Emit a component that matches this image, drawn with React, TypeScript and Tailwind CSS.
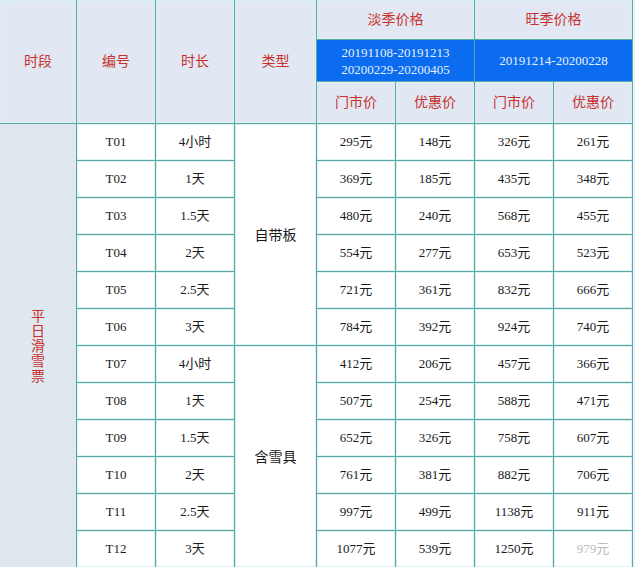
import React from "react";

const rows = [
  ["T01", "4小时", "295元", "148元", "326元", "261元"],
  ["T02", "1天", "369元", "185元", "435元", "348元"],
  ["T03", "1.5天", "480元", "240元", "568元", "455元"],
  ["T04", "2天", "554元", "277元", "653元", "523元"],
  ["T05", "2.5天", "721元", "361元", "832元", "666元"],
  ["T06", "3天", "784元", "392元", "924元", "740元"],
  ["T07", "4小时", "412元", "206元", "457元", "366元"],
  ["T08", "1天", "507元", "254元", "588元", "471元"],
  ["T09", "1.5天", "652元", "326元", "758元", "607元"],
  ["T10", "2天", "761元", "381元", "882元", "706元"],
  ["T11", "2.5天", "997元", "499元", "1138元", "911元"],
  ["T12", "3天", "1077元", "539元", "1250元", "979元"],
];

const head =
  "flex items-center justify-center bg-[#e1e8f4] text-[#c8302c] text-[14px] ring-1 ring-inset ring-[#d9f3f5]";
const cell =
  "flex items-center justify-center bg-white text-[13px] text-[#1a1a1a] ring-1 ring-inset ring-[#daf4f4]";

export default function App() {
  return (
    <div className="w-[635px] h-[567px] overflow-hidden bg-[#e6f6f8] font-['Liberation_Serif','Noto_Sans_CJK_SC',serif]">
      <div className="grid w-[633px] grid-cols-[76px_78px_78px_81px_78px_78px_78px_78px] grid-rows-[39px_41px_41px_repeat(12,36px)] gap-px bg-[#5ea6a5] pr-px">
        {/* header */}
        <div className={`${head} row-span-3`}>时段</div>
        <div className={`${head} row-span-3`}>编号</div>
        <div className={`${head} row-span-3`}>时长</div>
        <div className={`${head} row-span-3`}>类型</div>
        <div className={`${head} col-span-2`}>淡季价格</div>
        <div className={`${head} col-span-2`}>旺季价格</div>
        <div className="col-span-2 flex flex-col items-center justify-center bg-[#0b6cf0] text-[13px] leading-[17px] text-[#e3efff]">
          <span>20191108-20191213</span>
          <span>20200229-20200405</span>
        </div>
        <div className="col-span-2 flex items-center justify-center bg-[#0b6cf0] text-[13px] text-[#e3efff]">
          20191214-20200228
        </div>
        <div className={head}>门市价</div>
        <div className={head}>优惠价</div>
        <div className={head}>门市价</div>
        <div className={head}>优惠价</div>

        {/* body */}
        {rows.map((r, i) => (
          <React.Fragment key={r[0]}>
            {i === 0 && (
              <div className="row-span-12 flex items-center justify-center bg-[#dfe7ef] text-[14px] text-[#c8302c]">
                <span className="w-[14px] leading-[15px] text-center font-['Noto_Sans_CJK_SC',sans-serif]">平日滑雪票</span>
              </div>
            )}
            <div className={cell}>{r[0]}</div>
            <div className={cell}>{r[1]}</div>
            {i === 0 && (
              <div className={`${cell} row-span-6 text-[14px] font-['Noto_Sans_CJK_SC',sans-serif]`}>自带板</div>
            )}
            {i === 6 && (
              <div className={`${cell} row-span-6 text-[14px] font-['Noto_Sans_CJK_SC',sans-serif]`}>含雪具</div>
            )}
            <div className={cell}>{r[2]}</div>
            <div className={cell}>{r[3]}</div>
            <div className={cell}>{r[4]}</div>
            <div className={`${cell} ${i === 11 ? "text-[#b8bcc0]" : ""}`}>{r[5]}</div>
          </React.Fragment>
        ))}
      </div>
    </div>
  );
}
